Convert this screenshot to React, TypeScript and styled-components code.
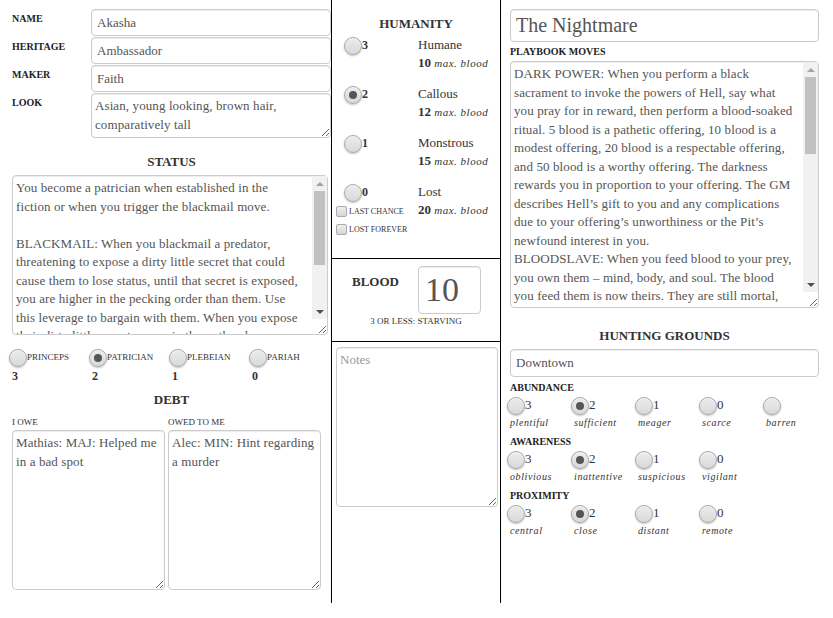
import React from "react";
import styled, { createGlobalStyle, css } from "styled-components";

const Global = createGlobalStyle`
  html, body { margin: 0; padding: 0; background: #fff; }
  body { font-family: "Liberation Serif", "Times New Roman", serif; color: #333; }
  * { box-sizing: border-box; }
`;

const Sheet = styled.div`
  display: grid;
  grid-template-columns: 332px 169px 1fr;
  height: 603px;
  width: 833px;
`;

const Column = styled.div<{ $border?: boolean }>`
  display: flex;
  flex-direction: column;
  ${(p) => p.$border && css`border-right: 1px solid #000;`}
  min-width: 0;
`;

const fieldBase = css`
  font-family: "Liberation Serif", "Times New Roman", serif;
  font-size: 13px;
  color: #555;
  background: #fff;
  border: 1px solid #ccc;
  border-radius: 4px;
  outline: none;
  box-shadow: inset 0 1px 1px rgba(0, 0, 0, 0.075);
`;

const TextInput = styled.input<{ $h?: number; $size?: number }>`
  ${fieldBase}
  width: 100%;
  height: ${(p) => p.$h ?? 27}px;
  font-size: ${(p) => p.$size ?? 13}px;
  padding: 0 5px;
  display: block;
`;

const TextArea = styled.textarea<{ $h: number; $ls?: number; $pr?: number }>`
  ${fieldBase}
  display: block;
  width: 100%;
  height: ${(p) => p.$h}px;
  line-height: 18.5px;
  padding: 3px ${(p) => p.$pr ?? 3}px 3px 3px;
  letter-spacing: ${(p) => p.$ls ?? 0}px;
  resize: vertical;
  overflow: hidden;
  &::placeholder { color: #999; letter-spacing: 0; }
`;

/* drawn scrollbar laid over a textarea */
const ScrollWrap = styled.div`
  position: relative;
`;

const ScrollBar = styled.div`
  position: absolute;
  top: 1px;
  right: 1px;
  bottom: 16px;
  width: 15px;
  background: #f1f1f1;
  display: flex;
  flex-direction: column;
  pointer-events: none;
`;

const ScrollBtn = styled.div<{ $down?: boolean }>`
  height: 15px;
  flex: none;
  display: flex;
  align-items: center;
  justify-content: center;
  &::before {
    content: "";
    width: 0;
    height: 0;
    border-left: 4px solid transparent;
    border-right: 4px solid transparent;
    ${(p) =>
      p.$down
        ? css`border-top: 4px solid #505050;`
        : css`border-bottom: 4px solid #a3a3a3;`}
  }
`;

const Track = styled.div`
  flex: 1;
  position: relative;
`;

const Thumb = styled.div<{ $h: number }>`
  position: absolute;
  top: 0;
  left: 2px;
  right: 2px;
  height: ${(p) => p.$h}px;
  background: #c1c1c1;
`;

function Scrolled(props: { h: number; thumb: number; value: string; ls: number; pr: number }) {
  return (
    <ScrollWrap>
      <TextArea $h={props.h} $ls={props.ls} $pr={props.pr} defaultValue={props.value} />
      <ScrollBar>
        <ScrollBtn />
        <Track>
          <Thumb $h={props.thumb} />
        </Track>
        <ScrollBtn $down />
      </ScrollBar>
    </ScrollWrap>
  );
}

const Left = styled.div`
  padding: 9px 0 0 12px;
  display: flex;
  flex-direction: column;
`;

const IdentityGrid = styled.div`
  display: grid;
  grid-template-columns: 79px 1fr;
  row-gap: 1px;
`;

const SmallLabel = styled.div<{ $pt?: number }>`
  font-size: 10px;
  font-weight: bold;
  text-transform: uppercase;
  padding-top: ${(p) => p.$pt ?? 4}px;
  line-height: 12px;
  color: #222;
`;

const Heading = styled.h3<{ $mt: number; $mb: number }>`
  margin: ${(p) => p.$mt}px 0 ${(p) => p.$mb}px;
  text-align: center;
  font-size: 13px;
  font-weight: bold;
  color: #333;
  line-height: 16px;
`;

const StatusBox = styled.div`
  padding-right: 3px;
`;

const StatusRow = styled.div`
  display: grid;
  grid-template-columns: repeat(4, 80px);
  margin: 14px 0 0 -3px;
`;

const StatusCell = styled.div`
  display: flex;
  flex-direction: column;
`;

const RadioLine = styled.label`
  display: flex;
  align-items: flex-start;
`;

const Radio = styled.input.attrs({ type: "radio" })`
  appearance: none;
  -webkit-appearance: none;
  margin: 0;
  width: 18px;
  height: 18px;
  border-radius: 50%;
  border: 1px solid #a8a8a8;
  background: linear-gradient(#ececec, #d9d9d9);
  box-shadow: 0 1px 2px rgba(0, 0, 0, 0.25), inset 0 1px 0 rgba(255, 255, 255, 0.6);
  position: relative;
  flex: none;
  &:checked::after {
    content: "";
    position: absolute;
    left: 4px;
    top: 4px;
    width: 8px;
    height: 8px;
    border-radius: 50%;
    background: #555;
  }
`;

const TinyCaps = styled.span`
  font-size: 9px;
  text-transform: uppercase;
  color: #333;
  line-height: 12px;
  padding-top: 2px;
`;

const BoldNum = styled.span<{ $size?: number }>`
  font-weight: bold;
  font-size: ${(p) => p.$size ?? 12}px;
  color: #333;
`;

const StatusNum = styled(BoldNum)`
  padding: 3px 0 0 3px;
  line-height: 12px;
`;

const DebtGrid = styled.div`
  display: grid;
  grid-template-columns: 153px 153px;
  column-gap: 3px;
`;

const DebtLabel = styled.div`
  font-size: 9px;
  text-transform: uppercase;
  margin-bottom: 2px;
  line-height: 12px;
`;

/* middle */
const Humanity = styled.div`
  border-bottom: 1px solid #000;
  height: 259px;
  padding: 16px 0 0 12px;
`;

const HumRow = styled.div`
  display: grid;
  grid-template-columns: 74px 1fr;
  height: 49px;
`;

const HumLeft = styled.div`
  display: flex;
  flex-direction: column;
`;

const HumRadio = styled.label`
  display: flex;
  align-items: flex-start;
  span { padding-top: 1px; }
`;

const HumText = styled.div`
  font-size: 13px;
  line-height: 18px;
  color: #333;
  margin-top: -1px;
`;

const Italic = styled.i`
  font-size: 11px;
  letter-spacing: 0.5px;
  color: #333;
`;

const CheckLine = styled.label`
  display: flex;
  align-items: center;
  margin-left: -8px;
  height: 18px;
`;

const Check = styled.input.attrs({ type: "checkbox" })`
  appearance: none;
  -webkit-appearance: none;
  margin: 0 2px 0 0;
  width: 11px;
  height: 11px;
  border: 1px solid #aaa;
  border-radius: 2px;
  background: linear-gradient(#eee, #d6d6d6);
`;

const Tiny = styled.span`
  font-size: 8px;
  text-transform: uppercase;
  color: #333;
`;

const Blood = styled.div`
  border-bottom: 1px solid #000;
  height: 83px;
  display: flex;
  flex-direction: column;
  align-items: center;
  padding-top: 7px;
`;

const BloodTop = styled.div`
  display: flex;
  align-items: flex-start;
  width: 100%;
  padding-left: 20px;
`;

const BloodLabel = styled.div`
  font-size: 13px;
  font-weight: bold;
  width: 66px;
  padding-top: 8px;
`;

const BloodInput = styled.input`
  ${fieldBase}
  width: 63px;
  height: 48px;
  font-size: 34px;
  padding: 0 0 0 6px;
`;

const Starving = styled.div`
  font-size: 9px;
  margin-top: 2px;
  text-transform: uppercase;
`;

const Notes = styled.div`
  padding: 5px 2px 0 4px;
`;

/* right */
const Right = styled.div`
  padding: 9px 14px 0 9px;
  display: flex;
  flex-direction: column;
`;

const HuntBlock = styled.div`
  display: flex;
  flex-direction: column;
`;

const HuntRow = styled.div`
  display: grid;
  grid-template-columns: repeat(5, 64px);
  margin: 3px 0 1px -3px;
`;

const HuntCell = styled.div`
  display: flex;
  flex-direction: column;
`;

const HuntNum = styled.span`
  font-size: 13px;
  line-height: 16px;
  color: #333;
`;

const HuntWord = styled.i`
  font-size: 10px;
  letter-spacing: 0.6px;
  padding-left: 3px;
  line-height: 14px;
  margin-top: 1px;
  color: #333;
`;

const statusText = `You become a patrician when established in the fiction or when you trigger the blackmail move.

BLACKMAIL: When you blackmail a predator, threatening to expose a dirty little secret that could cause them to lose status, until that secret is exposed, you are higher in the pecking order than them. Use this leverage to bargain with them. When you expose their dirty little secret, you ruin them; they become a pariah.`;

const movesText = `DARK POWER: When you perform a black sacrament to invoke the powers of Hell, say what you pray for in reward, then perform a blood-soaked ritual. 5 blood is a pathetic offering, 10 blood is a modest offering, 20 blood is a respectable offering, and 50 blood is a worthy offering. The darkness rewards you in proportion to your offering. The GM describes Hell’s gift to you and any complications due to your offering’s unworthiness or the Pit’s newfound interest in you.
BLOODSLAVE: When you feed blood to your prey, you own them – mind, body, and soul. The blood you feed them is now theirs. They are still mortal, and the living blood that flows through their veins is yours to command.`;

const statuses = [
  ["princeps", "3"],
  ["patrician", "2"],
  ["plebeian", "1"],
  ["pariah", "0"],
];

const humanity = [
  ["3", "Humane", "10"],
  ["2", "Callous", "12"],
  ["1", "Monstrous", "15"],
  ["0", "Lost", "20"],
];

const hunting: { label: string; name: string; items: [string, string][] }[] = [
  {
    label: "Abundance",
    name: "abundance",
    items: [
      ["3", "plentiful"],
      ["2", "sufficient"],
      ["1", "meager"],
      ["0", "scarce"],
      ["", "barren"],
    ],
  },
  {
    label: "Awareness",
    name: "awareness",
    items: [
      ["3", "oblivious"],
      ["2", "inattentive"],
      ["1", "suspicious"],
      ["0", "vigilant"],
    ],
  },
  {
    label: "Proximity",
    name: "proximity",
    items: [
      ["3", "central"],
      ["2", "close"],
      ["1", "distant"],
      ["0", "remote"],
    ],
  },
];

export default function App() {
  return (
    <>
      <Global />
      <Sheet>
        <Column $border>
          <Left>
            <IdentityGrid>
              <SmallLabel>Name</SmallLabel>
              <TextInput defaultValue="Akasha" />
              <SmallLabel>Heritage</SmallLabel>
              <TextInput defaultValue="Ambassador" />
              <SmallLabel>Maker</SmallLabel>
              <TextInput defaultValue="Faith" />
              <SmallLabel>Look</SmallLabel>
              <TextArea $h={45} $ls={0.1} defaultValue="Asian, young looking, brown hair, comparatively tall" />
            </IdentityGrid>
            <Heading $mt={16} $mb={5}>STATUS</Heading>
            <StatusBox>
              <Scrolled h={160} thumb={74} ls={0.1} pr={25} value={statusText} />
            </StatusBox>
            <StatusRow>
              {statuses.map(([s, n]) => (
                <StatusCell key={s}>
                  <RadioLine>
                    <Radio name="status" defaultChecked={s === "patrician"} />
                    <TinyCaps>{s}</TinyCaps>
                  </RadioLine>
                  <StatusNum>{n}</StatusNum>
                </StatusCell>
              ))}
            </StatusRow>
            <Heading $mt={10} $mb={8}>DEBT</Heading>
            <DebtGrid>
              <div>
                <DebtLabel>I owe</DebtLabel>
                <TextArea $h={160} $ls={0.1} defaultValue="Mathias: MAJ: Helped me in a bad spot" />
              </div>
              <div>
                <DebtLabel>Owed to me</DebtLabel>
                <TextArea $h={160} $ls={0.1} defaultValue="Alec: MIN: Hint regarding a murder" />
              </div>
            </DebtGrid>
          </Left>
        </Column>

        <Column $border>
          <Humanity>
            <Heading $mt={0} $mb={5} style={{ marginLeft: -12 }}>HUMANITY</Heading>
            {humanity.map(([n, name, max], i) => (
              <HumRow key={n}>
                <HumLeft>
                  <HumRadio>
                    <Radio name="humanity" defaultChecked={n === "2"} />
                    <BoldNum>{n}</BoldNum>
                  </HumRadio>
                  {i === 3 && (
                    <>
                      <CheckLine>
                        <Check />
                        <Tiny>Last chance</Tiny>
                      </CheckLine>
                      <CheckLine>
                        <Check />
                        <Tiny>Lost forever</Tiny>
                      </CheckLine>
                    </>
                  )}
                </HumLeft>
                <HumText>
                  {name}
                  <br />
                  <BoldNum $size={13}>{max}</BoldNum> <Italic>max. blood</Italic>
                </HumText>
              </HumRow>
            ))}
          </Humanity>
          <Blood>
            <BloodTop>
              <BloodLabel>BLOOD</BloodLabel>
              <BloodInput defaultValue="10" />
            </BloodTop>
            <Starving>3 or less: starving</Starving>
          </Blood>
          <Notes>
            <TextArea $h={160} placeholder="Notes" />
          </Notes>
        </Column>

        <Column>
          <Right>
            <TextInput $h={33} $size={20} defaultValue="The Nightmare" />
            <SmallLabel $pt={4} style={{ marginBottom: 3 }}>Playbook moves</SmallLabel>
            <Scrolled h={247} thumb={77} ls={0.1} pr={22} value={movesText} />
            <Heading $mt={20} $mb={5}>HUNTING GROUNDS</Heading>
            <TextInput $h={28} defaultValue="Downtown" />
            <HuntBlock>
              {hunting.map((h) => (
                <React.Fragment key={h.name}>
                  <SmallLabel $pt={5}>{h.label}</SmallLabel>
                  <HuntRow>
                    {h.items.map(([n, w]) => (
                      <HuntCell key={w}>
                        <RadioLine>
                          <Radio name={h.name} defaultChecked={n === "2"} />
                          <HuntNum>{n}</HuntNum>
                        </RadioLine>
                        <HuntWord>{w}</HuntWord>
                      </HuntCell>
                    ))}
                  </HuntRow>
                </React.Fragment>
              ))}
            </HuntBlock>
          </Right>
        </Column>
      </Sheet>
    </>
  );
}
